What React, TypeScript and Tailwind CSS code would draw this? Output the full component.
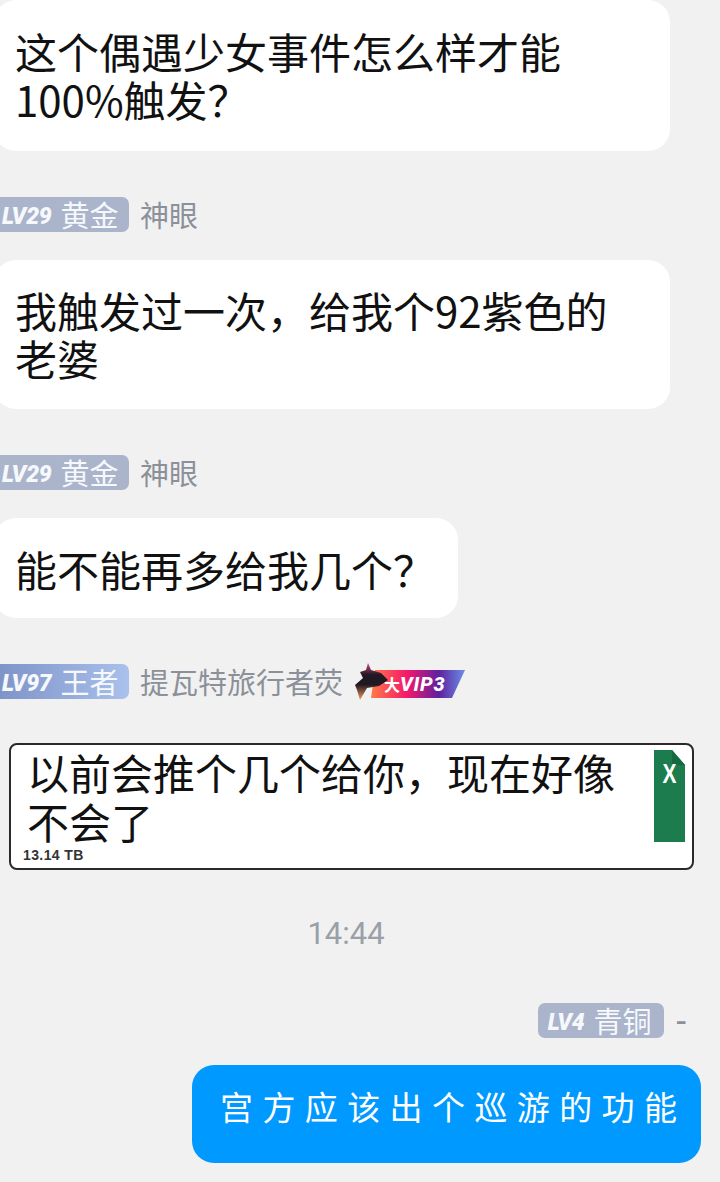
const cjk = "font-['Noto_Sans_CJK_SC','Noto_Sans',sans-serif]";

function Badge({ lv, title, className }: { lv: string; title: string; className: string }) {
  return (
    <div className={`flex h-[35px] items-center rounded-r-[7px] ${className}`}>
      <span className="pt-[5px] font-['Roboto',sans-serif] text-[23px] font-black italic leading-[30px] tracking-[-0.2px] text-[#f6f8fc]">{lv}</span>
      <span className="ml-[9px] text-[29px] leading-[35px] text-[#f6f8fc]">{title}</span>
    </div>
  );
}

function Meta({ lv, title, name, className, mt, children }: { lv: string; title: string; name: string; className: string; mt: string; children?: React.ReactNode }) {
  return (
    <div className={`flex h-[35px] items-center ${mt}`}>
      <Badge lv={lv} title={title} className={`w-[129px] pl-[2px] ${className}`} />
      <span className="ml-[11px] text-[29px] leading-[35px] text-[#8b9099]">{name}</span>
      {children}
    </div>
  );
}

function Bubble({ lines, className }: { lines: string[]; className: string }) {
  return (
    <div className={`-ml-[6px] rounded-[22px] bg-white pl-[21px] text-[42px] leading-[48px] text-[#111] ${className}`}>
      {lines.map((l) => (
        <div key={l} className="whitespace-nowrap">{l}</div>
      ))}
    </div>
  );
}

function VipTag() {
  return (
    <svg width="112" height="38" viewBox="0 0 112 38" className="ml-[12px] shrink-0">
      <defs>
        <linearGradient id="vip" x1="0" x2="1" y1="0" y2="0">
          <stop offset="0" stopColor="#ff7a45" />
          <stop offset="0.38" stopColor="#f5196a" />
          <stop offset="0.72" stopColor="#5f209f" />
          <stop offset="1" stopColor="#6a8fe6" />
        </linearGradient>
        <linearGradient id="wing" x1="0" x2="0" y1="0" y2="1">
          <stop offset="0" stopColor="#d0487c" />
          <stop offset="0.32" stopColor="#201823" />
          <stop offset="0.58" stopColor="#201823" />
          <stop offset="1" stopColor="#f59a60" />
        </linearGradient>
      </defs>
      <path d="M20 7 L110 7 L97 35 L16 35 Z" fill="url(#vip)" />
      <path d="M13 0 L16 7 L26 10 L33 17 L24 23 L12 25 L5 37 L2 27 L0 22 L8 15 L5 9 L11 7 Z" fill="url(#wing)" />
      <text x="29" y="28" fontFamily="'Noto Sans CJK SC',sans-serif" fontSize="16" fontWeight="700" fill="#fff">大</text>
      <text x="45" y="28" fontFamily="'Roboto',sans-serif" fontSize="20" fontWeight="800" fontStyle="italic" fill="#fff" letterSpacing="0.8">VIP3</text>
    </svg>
  );
}

export default function App() {
  return (
    <div className={`h-[1182px] w-[720px] overflow-hidden bg-[#f1f1f1] ${cjk}`}>
      <Bubble lines={["这个偶遇少女事件怎么样才能", "100%触发？"]} className="w-[676px] pb-[28px] pt-[27px]" />
      <Meta lv="LV29" title="黄金" name="神眼" className="bg-[#aab4cb]" mt="mt-[46px]" />
      <Bubble lines={["我触发过一次，给我个92紫色的", "老婆"]} className="mt-[28px] w-[676px] pb-[27px] pt-[26px]" />
      <Meta lv="LV29" title="黄金" name="神眼" className="bg-[#aab4cb]" mt="mt-[46px]" />
      <Bubble lines={["能不能再多给我几个？"]} className="mt-[28px] w-[464px] pb-[25px] pt-[27px]" />
      <Meta lv="LV97" title="王者" name="提瓦特旅行者荧" className="bg-gradient-to-r from-[#7f94c8] to-[#a9c1ec]" mt="mt-[46px]">
        <VipTag />
      </Meta>

      <div className="ml-[9px] mt-[44px] flex h-[127px] w-[685px] justify-between rounded-[8px] border-2 border-[#2a2a2a] bg-white pl-[16px] pr-[7px] pt-[3px]">
        <div>
          <div className="text-[42px] leading-[48px] text-[#111]">
            <div className="whitespace-nowrap">以前会推个几个给你，现在好像</div>
            <div className="mt-[1px] whitespace-nowrap">不会了</div>
          </div>
          <div className="-ml-[4px] mt-[3px] font-['Liberation_Sans',sans-serif] text-[14px] font-bold leading-[15px] tracking-[0.4px] text-[#333]">13.14 TB</div>
        </div>
        <svg width="31" height="92" viewBox="0 0 31 92" className="mt-[2px] shrink-0">
          <path d="M0 0 H18 L31 15 V92 H0 Z" fill="#1c7c4e" />
          <path d="M18 0 L31 15 H18 Z" fill="#166a41" />
          <text x="15.5" y="33" textAnchor="middle" textLength="14" lengthAdjust="spacingAndGlyphs" fontFamily="'Liberation Sans',sans-serif" fontSize="27" fontWeight="700" fill="#fff">X</text>
        </svg>
      </div>

      <div className="mt-[46px] text-center font-['Roboto',sans-serif] text-[31px] leading-[36px] text-[#9a9fa8] [text-indent:-28px]">14:44</div>

      <div className="mt-[51px] flex h-[35px] items-center justify-end pr-[33px]">
        <Badge lv="LV4" title="青铜" className="rounded-l-[7px] bg-[#aab4cb] pl-[10px] pr-[12px]" />
        <span className="ml-[12px] pb-[4px] text-[32px] font-medium leading-[31px] text-[#8b9099]">-</span>
      </div>

      <div className="ml-[192px] mt-[27px] flex h-[98px] w-[509px] items-center rounded-[22px] bg-[#0099ff] pb-[14px] pl-[28px] text-[33px] tracking-[9.4px] text-white">
        <span className="whitespace-nowrap">宫方应该出个巡游的功能</span>
      </div>
    </div>
  );
}
